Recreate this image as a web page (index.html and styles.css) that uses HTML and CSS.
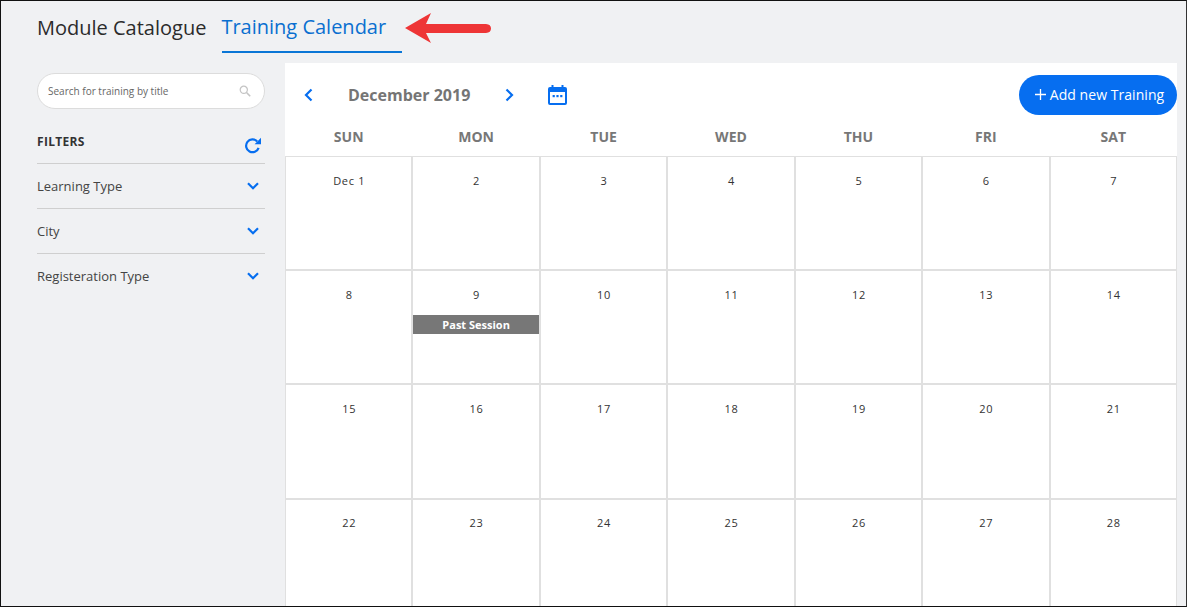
FILE: index.html
```html
<!DOCTYPE html>
<html lang="en">
<head>
    <meta charset="UTF-8">
    <meta name="viewport" content="width=device-width, initial-scale=1.0">
    <title>Training Calendar</title>
    <link rel="stylesheet" href="styles.css">
</head>
<body>
    <div class="frame">
        <div class="tabs">
            <a class="tab">Module Catalogue</a>
            <a class="tab tab-active">Training Calendar</a>
        </div>

        <!-- annotation arrow drawn over the page -->
        <svg class="arrow" width="86" height="31" viewBox="0 0 86 31">
            <path d="M0 15 L26 0 L21 11 L81 11 Q86 11.3 86 15.5 Q86 19.7 81 20 L21 20 L26 30 Z" fill="#ee3536"/>
        </svg>

        <div class="content">
            <aside class="sidebar">
                <div class="search">
                    <span class="search-text">Search for training by title</span>
                    <svg width="12" height="12" viewBox="0 0 12 12" fill="none" stroke="#c4c4c4" stroke-width="1.2">
                        <circle cx="4.8" cy="4.8" r="3.6"/>
                        <path d="M7.5 7.5 L11.2 11.2" stroke-width="1.6"/>
                    </svg>
                </div>
                <div class="filters-head">
                    <span>FILTERS</span>
                    <svg width="18" height="18" viewBox="0 0 18 18" fill="none">
                        <path d="M14.6 10.8 A6.4 6.4 0 1 1 13.2 4.4" stroke="#066ef0" stroke-width="2.2"/>
                        <path d="M10.6 7.2 H17 V0.8 Z" fill="#066ef0"/>
                    </svg>
                </div>
                <div class="filter">
                    <span>Learning Type</span>
                    <svg class="chev" width="12" height="8" viewBox="0 0 12 8"><path d="M1 1.2 L6 6.2 L11 1.2"/></svg>
                </div>
                <div class="filter">
                    <span>City</span>
                    <svg class="chev" width="12" height="8" viewBox="0 0 12 8"><path d="M1 1.2 L6 6.2 L11 1.2"/></svg>
                </div>
                <div class="filter">
                    <span>Registeration Type</span>
                    <svg class="chev" width="12" height="8" viewBox="0 0 12 8"><path d="M1 1.2 L6 6.2 L11 1.2"/></svg>
                </div>
            </aside>

            <main class="calendar">
                <div class="cal-toolbar">
                    <svg class="nav nav-prev" width="9" height="14" viewBox="0 0 9 14"><path d="M7.5 1.5 L2 7 L7.5 12.5"/></svg>
                    <span class="month">December 2019</span>
                    <svg class="nav nav-next" width="9" height="14" viewBox="0 0 9 14"><path d="M1.5 1.5 L7 7 L1.5 12.5"/></svg>
                    <svg class="cal-icon" width="19" height="20" viewBox="0 0 19 20">
                        <path d="M3.5 0 H5.5 V2 H13.5 V0 H15.5 V2 H17 Q19 2 19 4 V18 Q19 20 17 20 H2 Q0 20 0 18 V4 Q0 2 2 2 H3.5 Z M2 7 V18 H17 V7 Z" fill="#066ef0" fill-rule="evenodd"/>
                        <rect x="4.6" y="10" width="2.2" height="2.2" fill="#066ef0"/>
                        <rect x="8.4" y="10" width="2.2" height="2.2" fill="#066ef0"/>
                        <rect x="12.2" y="10" width="2.2" height="2.2" fill="#066ef0"/>
                    </svg>
                    <button class="add-btn">
                        <svg width="11" height="11" viewBox="0 0 11 11"><path d="M5.5 0 V11 M0 5.5 H11" stroke="#fff" stroke-width="1.3"/></svg>
                        Add new Training
                    </button>
                </div>
                <div class="weekdays">
                    <div>SUN</div><div>MON</div><div>TUE</div><div>WED</div><div>THU</div><div>FRI</div><div>SAT</div>
                </div>
                <div class="month-grid">
                    <div class="day">Dec 1</div><div class="day">2</div><div class="day">3</div><div class="day">4</div><div class="day">5</div><div class="day">6</div><div class="day">7</div>
                    <div class="day">8</div>
                    <div class="day">9<div class="event">Past Session</div></div>
                    <div class="day">10</div><div class="day">11</div><div class="day">12</div><div class="day">13</div><div class="day">14</div>
                    <div class="day">15</div><div class="day">16</div><div class="day">17</div><div class="day">18</div><div class="day">19</div><div class="day">20</div><div class="day">21</div>
                    <div class="day">22</div><div class="day">23</div><div class="day">24</div><div class="day">25</div><div class="day">26</div><div class="day">27</div><div class="day">28</div>
                </div>
            </main>
        </div>
    </div>
</body>
</html>
```

FILE: styles.css
```css
html, body {
    margin: 0;
    padding: 0;
}

body {
    font-family: 'Open Sans', sans-serif;
    color: #333;
}

.frame {
    position: relative;
    box-sizing: border-box;
    width: 1187px;
    height: 607px;
    overflow: hidden;
    background-color: #f0f1f3;
    border: 1px solid #111;
    border-right-color: #333;
}

/* Tabs */
.tabs {
    display: flex;
    height: 51px;
    padding-left: 36px;
    gap: 16px;
}

.tab {
    font-size: 20px;
    line-height: 54px;
    color: #2b2b2b;
}

.tab-active {
    box-sizing: border-box;
    width: 180px;
    height: 52px;
    color: #0a6fd0;
    line-height: 52px;
    text-indent: -1px;
    border-bottom: 2px solid #0a76d6;
}

.arrow {
    position: absolute;
    left: 404px;
    top: 12px;
}

.content {
    display: flex;
    margin-top: 11px;
}

/* Sidebar */
.sidebar {
    box-sizing: border-box;
    width: 284px;
    padding: 10px 20px 0 36px;
}

.search {
    display: flex;
    align-items: center;
    justify-content: space-between;
    box-sizing: border-box;
    height: 36px;
    padding: 0 13px 0 10px;
    background-color: #fff;
    border: 1px solid #dcdcdc;
    border-radius: 18px;
}

.search-text {
    font-size: 10px;
    color: #666;
}

.filters-head {
    display: flex;
    align-items: flex-start;
    justify-content: space-between;
    box-sizing: border-box;
    height: 54px;
    padding: 24px 3px 0 0;
    font-size: 12px;
    font-weight: 700;
    letter-spacing: 0.3px;
    color: #333;
}

.filters-head svg {
    margin-top: 4px;
}

.filter {
    display: flex;
    align-items: center;
    justify-content: space-between;
    box-sizing: border-box;
    height: 45px;
    padding-right: 6px;
    font-size: 13px;
    color: #444;
    border-top: 1px solid #cfcfcf;
}

.chev path, .nav path {
    fill: none;
    stroke: #066ef0;
    stroke-width: 2.2;
}

/* Calendar */
.calendar {
    flex: none;
    width: 892px;
    height: 543px;
    background-color: #fff;
}

.cal-toolbar {
    display: flex;
    align-items: center;
    height: 64px;
    box-sizing: border-box;
    padding: 0 0 0 19px;
}

.nav-prev {
    margin-right: 35px;
}

.month {
    width: 122px;
    font-size: 16px;
    font-weight: 700;
    color: #757575;
    white-space: nowrap;
}

.nav-next {
    margin-left: 35px;
}

.cal-icon {
    margin-left: 34px;
}

.add-btn {
    display: flex;
    align-items: center;
    justify-content: center;
    gap: 4px;
    margin-left: auto;
    width: 158px;
    height: 40px;
    margin-bottom: 1px;
    padding: 0 0 0 3px;
    font-family: inherit;
    font-size: 14px;
    letter-spacing: 0.05px;
    color: #fff;
    background-color: #066ef0;
    border: none;
    border-radius: 20px;
    white-space: nowrap;
}

.weekdays {
    display: grid;
    grid-template-columns: repeat(7, 1fr);
    height: 29px;
}

.weekdays div {
    font-size: 14px;
    font-weight: 700;
    line-height: 20px;
    text-align: center;
    color: #777;
}

.month-grid {
    display: grid;
    grid-template-columns: 126.4px repeat(6, 1fr);
    grid-template-rows: 113px 114px 115px 114px;
    border-right: 1px solid #e0e0e0;
}

.day {
    box-sizing: border-box;
    padding-top: 16px;
    font-size: 11px;
    line-height: 15px;
    letter-spacing: 0.7px;
    text-indent: 1px;
    text-align: center;
    color: #333;
    border-top: 2px solid #e0e0e0;
    border-left: 2px solid #e0e0e0;
}

.day:nth-child(7n+1) {
    border-left-width: 1px;
}

.day:nth-child(-n+7) {
    border-top-width: 1px;
}

.day:nth-child(n+22) {
    padding-top: 15px;
}

.event {
    margin-top: 13px;
    height: 19px;
    font-size: 11px;
    font-weight: 700;
    line-height: 19px;
    letter-spacing: 0;
    text-indent: 0;
    color: #fff;
    background-color: #777;
}
```
